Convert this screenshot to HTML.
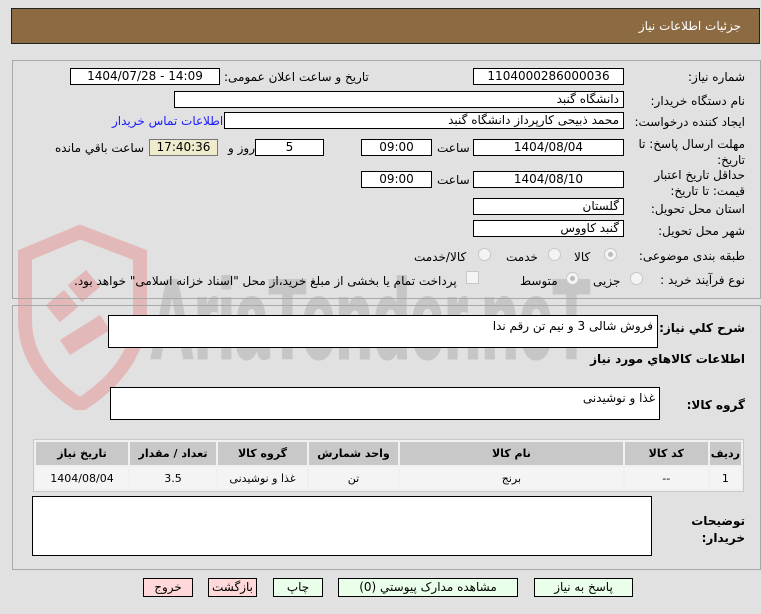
<!DOCTYPE html>
<html><head><meta charset="utf-8"><style>
body{margin:0;width:761px;height:614px;background:#e1e1e1;font-family:"DejaVu Sans","Liberation Sans",sans-serif;font-size:12px;color:#000;position:relative;overflow:hidden}
.a{position:absolute}
.hdr{left:11px;top:8px;width:747px;height:34px;background:#8c6b42;border:1px solid #222}
.hdr span{position:absolute;right:18px;top:10px;color:#fff;font-size:12px}
.panel{border:1px solid #a8a8a8;position:absolute}
.in{position:absolute;background:#fff;border:1px solid #000;height:17px;box-sizing:border-box;line-height:15px;text-align:center;font-size:12px}
.r{text-align:right;padding-right:4px}
.l{position:absolute;white-space:nowrap;direction:rtl}
.w{white-space:normal;text-align:right}
.rad{position:absolute;width:11px;height:11px;border-radius:50%;border:1px solid #c8c8c8;background:#f4f4f4}
.rad.on:after{content:"";position:absolute;left:3px;top:3px;width:5px;height:5px;border-radius:50%;background:#bbb}
table{border-collapse:separate;border-spacing:2px;position:absolute;left:33px;top:439px;width:711px;background:#f0f0f0;border:1px solid #c8c8c8;direction:rtl;font-size:11px}
th{background:#c8c8c8;height:21px;font-weight:bold}
td{background:#f4f4f4;height:20px;text-align:center}
.btn{position:absolute;top:578px;height:19px;box-sizing:border-box;border:1px solid #000;background:#eaffea;text-align:center;line-height:17px}
.red{background:#ffd9d9}
.ta{position:absolute;background:#fff;border:1px solid #000;box-sizing:border-box;direction:rtl;padding:3px 4px}
b{font-weight:bold}
</style></head><body>
<svg class="a" style="left:0;top:220px" width="620" height="190">
<path d="M25 35 L80 12 L140 35 L140 100 Q135 150 80 185 Q25 150 25 100 Z" fill="none" stroke="#e3b8b8" stroke-width="14"/>
<rect x="50" y="75" width="24" height="22" fill="#e3b8b8" transform="rotate(-40 62 86)"/>
<rect x="72" y="55" width="24" height="22" fill="#e3b8b8" transform="rotate(-40 84 66)"/>
<path d="M60 120 L100 95 L110 110 L70 135 Z" fill="#e3b8b8"/>
<text x="150" y="138" font-family="Liberation Sans,sans-serif" font-weight="bold" font-size="112" fill="#c6c6c6" stroke="#c6c6c6" stroke-width="3" textLength="440" lengthAdjust="spacingAndGlyphs">AriaTender.neT</text>
</svg>
<div class="a hdr"><span>جزئیات اطلاعات نیاز</span></div>
<div class="panel" style="left:12px;top:60px;width:747px;height:237px"></div>
<div class="panel" style="left:12px;top:305px;width:747px;height:263px"></div>

<div class="l" style="right:16px;top:70px">شماره نیاز:</div>
<div class="in" style="left:473px;top:68px;width:151px">1104000286000036</div>
<div class="l" style="left:224px;top:70px">تاریخ و ساعت اعلان عمومی:</div>
<div class="in" style="left:70px;top:68px;width:150px">1404/07/28 - 14:09</div>

<div class="l" style="right:16px;top:94px">نام دستگاه خریدار:</div>
<div class="in r" style="left:174px;top:91px;width:450px">دانشگاه گنبد</div>

<div class="l" style="right:16px;top:115px">ایجاد کننده درخواست:</div>
<div class="in r" style="left:224px;top:112px;width:400px">محمد ذبیحی کارپرداز دانشگاه گنبد</div>
<div class="l" style="left:112px;top:114px;color:#1a1aff">اطلاعات تماس خریدار</div>

<div class="l w" style="right:16px;top:136px;width:112px;line-height:16px">مهلت ارسال پاسخ: تا تاریخ:</div>
<div class="in" style="left:473px;top:139px;width:151px">1404/08/04</div>
<div class="l" style="left:437px;top:141px">ساعت</div>
<div class="in" style="left:361px;top:139px;width:71px">09:00</div>
<div class="in" style="left:255px;top:139px;width:69px">5</div>
<div class="l" style="left:228px;top:141px">روز و</div>
<div class="in" style="left:149px;top:139px;width:69px;background:#eeeccc;border-color:#777">17:40:36</div>
<div class="l" style="left:55px;top:141px">ساعت باقي مانده</div>

<div class="l w" style="right:16px;top:167px;width:112px;line-height:16px">حداقل تاریخ اعتبار قیمت: تا تاریخ:</div>
<div class="in" style="left:473px;top:171px;width:151px">1404/08/10</div>
<div class="l" style="left:437px;top:173px">ساعت</div>
<div class="in" style="left:361px;top:171px;width:71px">09:00</div>

<div class="l" style="right:16px;top:202px">استان محل تحویل:</div>
<div class="in r" style="left:473px;top:198px;width:151px">گلستان</div>
<div class="l" style="right:16px;top:224px">شهر محل تحویل:</div>
<div class="in r" style="left:473px;top:220px;width:151px">گنبد کاووس</div>

<div class="l" style="right:16px;top:249px">طبقه بندی موضوعی:</div>
<div class="rad on" style="left:604px;top:248px"></div><div class="l" style="left:574px;top:250px">کالا</div>
<div class="rad" style="left:548px;top:248px"></div><div class="l" style="left:506px;top:250px">خدمت</div>
<div class="rad" style="left:478px;top:248px"></div><div class="l" style="left:414px;top:250px">کالا/خدمت</div>

<div class="l" style="right:16px;top:273px">نوع فرآیند خرید :</div>
<div class="rad" style="left:630px;top:272px"></div><div class="l" style="left:593px;top:274px">جزیی</div>
<div class="rad on" style="left:566px;top:272px"></div><div class="l" style="left:520px;top:274px">متوسط</div>
<div class="a" style="left:466px;top:271px;width:11px;height:11px;border:1px solid #c8c8c8;background:#f4f4f4"></div>
<div class="l" style="left:74px;top:274px">پرداخت تمام یا بخشی از مبلغ خرید،از محل "اسناد خزانه اسلامی" خواهد بود.</div>

<div class="l" style="right:16px;top:321px"><b>شرح کلي نياز:</b></div>
<div class="ta" style="left:108px;top:315px;width:550px;height:33px">فروش شالی 3 و نیم تن رقم ندا</div>
<div class="l" style="right:16px;top:352px"><b>اطلاعات کالاهاي مورد نياز</b></div>
<div class="l" style="right:16px;top:398px"><b>گروه کالا:</b></div>
<div class="ta" style="left:110px;top:387px;width:550px;height:33px">غذا و نوشیدنی</div>

<table>
<tr><th style="width:26px">ردیف</th><th style="width:81px">کد کالا</th><th>نام کالا</th><th style="width:87px">واحد شمارش</th><th style="width:87px">گروه کالا</th><th style="width:84px">تعداد / مقدار</th><th style="width:90px">تاریخ نیاز</th></tr>
<tr><td>1</td><td>--</td><td>برنج</td><td>تن</td><td>غذا و نوشیدنی</td><td>3.5</td><td>1404/08/04</td></tr>
</table>

<div class="ta" style="left:32px;top:496px;width:620px;height:60px"></div>
<div class="l w" style="right:16px;top:513px;line-height:17px;width:60px"><b>توضیحات خریدار:</b></div>

<div class="btn" style="left:534px;width:99px">پاسخ به نیاز</div>
<div class="btn" style="left:338px;width:180px">مشاهده مدارک پیوستي (0)</div>
<div class="btn" style="left:273px;width:50px">چاپ</div>
<div class="btn red" style="left:208px;width:49px">بازگشت</div>
<div class="btn red" style="left:143px;width:50px">خروج</div>
</body></html>
